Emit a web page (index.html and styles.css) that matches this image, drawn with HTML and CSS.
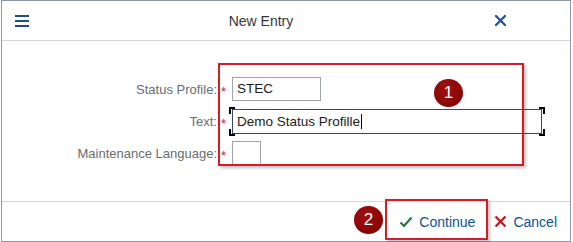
FILE: index.html
```html
<!DOCTYPE html>
<html>
<head>
<meta charset="utf-8">
<link rel="stylesheet" href="styles.css">
</head>
<body>
<div class="dialog">
  <header class="dlg-header">
    <svg class="menu-icon" width="14" height="12" viewBox="0 0 14 12"><rect x="0" y="0" width="14" height="2" fill="#1d4f80"/><rect x="0" y="5" width="14" height="2" fill="#1d4f80"/><rect x="0" y="10" width="14" height="2" fill="#1d4f80"/></svg>
    <div class="title">New Entry</div>
    <svg class="close-icon" width="11" height="11" viewBox="0 0 11 11"><path d="M1 1 L10 10 M10 1 L1 10" stroke="#1f5a96" stroke-width="2.4" stroke-linecap="round"/></svg>
  </header>
  <main class="dlg-content">
    <div class="form">
      <label class="lbl">Status Profile:</label><span class="req">*</span>
      <div class="field"><div class="input w-short">STEC</div></div>
      <label class="lbl">Text:</label><span class="req">*</span>
      <div class="field"><div class="input w-long focused">Demo Status Profille<span class="caret"></span>
        <span class="br tl"></span><span class="br bl"></span><span class="br tr"></span><span class="br brr"></span></div></div>
      <label class="lbl">Maintenance Language:</label><span class="req">*</span>
      <div class="field"><div class="input w-tiny"></div></div>
    </div>
  </main>
  <footer class="dlg-footer">
    <button class="btn">
      <svg width="14" height="12" viewBox="0 0 14 12"><path d="M1.5 6.5 L5 10 L12.5 1.5" fill="none" stroke="#1e7a3c" stroke-width="2.2"/></svg>
      <span>Continue</span>
    </button>
    <button class="btn">
      <svg width="13" height="13" viewBox="0 0 13 13"><path d="M1.5 1.5 L11.5 11.5 M11.5 1.5 L1.5 11.5" stroke="#c0161c" stroke-width="2.2"/></svg>
      <span>Cancel</span>
    </button>
  </footer>
</div>
<div class="mark box1"></div>
<div class="badge b1">1</div>
<div class="mark box2"></div>
<div class="badge b2">2</div>
</body>
</html>
```
FILE: styles.css
```css
html, body { margin: 0; padding: 0; background: #fff; }
body { font-family: "Liberation Sans", Arial, sans-serif; position: relative; width: 573px; height: 242px; overflow: hidden; }

.dialog {
  margin-left: 1px;
  width: 570px;
  height: 242px;
  box-sizing: border-box;
  border: 1px solid #8c99a8;
  display: flex;
  flex-direction: column;
}
.dlg-header {
  height: 39px;
  border-bottom: 1px solid #d5d8db;
  display: flex;
  align-items: center;
  padding-left: 13px;
  padding-right: 0;
}
.menu-icon { display: block; }
.title {
  width: 464px;
  text-align: center;
  font-size: 14px;
  color: #32363a;
}
.close-icon { display: block; margin-left: 2px; }

.dlg-content {
  height: 160px;
  box-sizing: border-box;
  padding-top: 32px;
}
.form {
  display: grid;
  grid-template-columns: 215px 15px 1fr;
  grid-auto-rows: 32px;
  align-items: center;
}
.lbl {
  text-align: right;
  font-size: 13px;
  color: #6a6d70;
}
.req {
  color: #c4262e;
  font-size: 13px;
  padding-left: 4px;
  align-self: center;
  padding-top: 4px;
}
.field { display: flex; }
.input {
  position: relative;
  height: 24px;
  box-sizing: border-box;
  border: 1px solid #9ea4aa;
  background: #fff;
  font-size: 13.5px;
  color: #1c1c1c;
  padding-left: 4px;
  line-height: 22px;
  white-space: nowrap;
}
.w-short { width: 89px; }
.w-long { width: 310px; }
.w-tiny { width: 29px; }
.focused { border-color: #354a5f; height: 25px; line-height: 23px; }
.caret {
  display: inline-block;
  width: 1px;
  height: 15px;
  background: #000;
  vertical-align: -3px;
  margin-left: 1px;
}
.br { position: absolute; width: 4px; height: 5px; border: 0 solid #000; }
.br.tl { left: -4px; top: -3px; border-left-width: 2px; border-top-width: 2px; }
.br.bl { left: -4px; bottom: -3px; border-left-width: 2px; border-bottom-width: 2px; }
.br.tr { right: -4px; top: -3px; border-right-width: 2px; border-top-width: 2px; }
.br.brr { right: -4px; bottom: -3px; border-right-width: 2px; border-bottom-width: 2px; }

.dlg-footer {
  height: 39px;
  border-top: 1px solid #d5d8db;
  display: flex;
  justify-content: flex-end;
  align-items: center;
  padding-right: 5px;
  gap: 3px;
}
.btn {
  display: flex;
  align-items: center;
  gap: 6px;
  padding: 0 8px;
  height: 30px;
  border: 0;
  background: transparent;
  font-family: "Liberation Sans", Arial, sans-serif;
  font-size: 14px;
  color: #0b5394;
}
.btn svg { display: block; }

.mark {
  position: absolute;
  box-sizing: border-box;
  border: 2px solid #d01f27;
  box-shadow: 2px 2px 3px rgba(0,0,0,0.25);
}
.box1 { left: 218px; top: 63px; width: 306px; height: 103px; }
.box2 { left: 385px; top: 199px; width: 103px; height: 41px; }
.badge {
  position: absolute;
  width: 29px;
  height: 28px;
  border-radius: 50%;
  background: radial-gradient(circle at 40% 35%, #a01010, #7d0000);
  color: #fff;
  font-size: 17px;
  line-height: 28px;
  text-align: center;
}
.b1 { left: 434px; top: 79px; }
.b2 { left: 354px; top: 206px; }
```
